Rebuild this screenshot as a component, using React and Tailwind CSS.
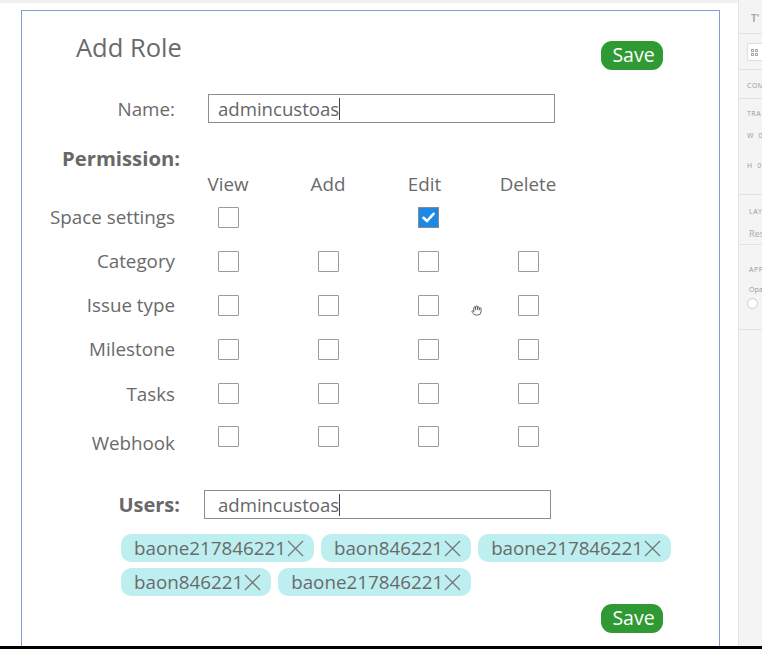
import React from "react";
import { Hand } from "lucide-react";

const FONT = { fontFamily: '"Open Sans", "Noto Sans", sans-serif' };

function Box({ checked }) {
  if (checked) {
    return (
      <div className="w-[21px] h-[21px] border border-[#8a8a8a] bg-[#1e88e5] flex items-center justify-center">
        <svg width="13" height="11" viewBox="0 0 13 11">
          <path d="M1.5 5.8 L5 9 L11.5 1.8" stroke="white" strokeWidth="2.6" fill="none" strokeLinecap="round" strokeLinejoin="round" />
        </svg>
      </div>
    );
  }
  return <div className="w-[21px] h-[21px] border-[1.5px] border-[#9a9a9a] bg-white rounded-[1px]" />;
}

function Cross() {
  return (
    <svg width="17" height="17" viewBox="0 0 17 17" className="ml-[1px]">
      <path d="M1 1 L16 16 M16 1 L1 16" stroke="#777" strokeWidth="1.3" fill="none" />
    </svg>
  );
}

function Tag({ label }) {
  return (
    <div className="h-[28px] flex items-center pl-[13px] pr-[10px] rounded-[10px] bg-[#bdeff0] text-[18.8px] text-[#6a6a6a]">
      <span>{label}</span>
      <Cross />
    </div>
  );
}

function SaveBtn() {
  return (
    <div className="w-[62px] h-[29px] rounded-[11px] bg-[#2f9a33] text-white text-[19.5px] flex items-center justify-center leading-none pb-[1px] pl-[3px]">
      Save
    </div>
  );
}

const rows = [
  ["Space settings", [true, false, true, false], [false, false, true, false]],
  ["Category", [true, true, true, true]],
  ["Issue type", [true, true, true, true]],
  ["Milestone", [true, true, true, true]],
  ["Tasks", [true, true, true, true]],
  ["Webhook", [true, true, true, true]],
];

function SidePanel() {
  const t = "text-[7px] text-[#999] tracking-[0.5px] leading-none whitespace-nowrap";
  return (
    <div className="w-[24px] h-full bg-[#f4f4f4] border-l border-[#e4e4e4] overflow-hidden flex flex-col">
      <div className="h-[34px] border-b border-[#e2e2e2] pl-[12px] pt-[13px] text-[10px] text-[#aaa] font-bold leading-none whitespace-nowrap">T'</div>
      <div className="h-[36px] border-b border-[#e2e2e2] pl-[8px] pt-[9px]">
        <div className="w-[20px] h-[18px] border border-[#ddd] bg-white rounded-[2px] flex items-center pl-[3px]">
          <div className="grid grid-cols-2 gap-[1px]">
            <div className="w-[3px] h-[3px] border border-[#aaa]" />
            <div className="w-[3px] h-[3px] border border-[#aaa]" />
            <div className="w-[3px] h-[3px] border border-[#aaa]" />
            <div className="w-[3px] h-[3px] border border-[#aaa]" />
          </div>
        </div>
      </div>
      <div className="h-[29px] border-b border-[#e2e2e2] pl-[8px] pt-[12px]"><div className={t}>COM</div></div>
      <div className="h-[96px] border-b border-[#e2e2e2] pl-[8px] pt-[11px]">
        <div className={t}>TRA</div>
        <div className={t + " mt-[15px]"}>W&nbsp;&nbsp;0</div>
        <div className="h-px bg-[#ddd] ml-[18px] mt-[8px]" />
        <div className={t + " mt-[14px]"}>H&nbsp;&nbsp;0</div>
        <div className="h-px bg-[#ddd] ml-[18px] mt-[8px]" />
      </div>
      <div className="h-[50px] border-b border-[#e2e2e2] pl-[10px] pt-[13px]">
        <div className={t}>LAY</div>
        <div className="text-[9px] text-[#aaa] leading-none mt-[14px] whitespace-nowrap">Res</div>
      </div>
      <div className="h-[85px] border-b border-[#e2e2e2] pl-[10px] pt-[21px]">
        <div className={t}>APP</div>
        <div className="text-[7px] text-[#999] leading-none mt-[13px] whitespace-nowrap">Opa</div>
        <div className="w-[11px] h-[11px] rounded-full border border-[#ccc] bg-white mt-[5px] -ml-[2px]" />
      </div>
    </div>
  );
}

export default function App() {
  return (
    <div className="w-[762px] h-[649px] overflow-hidden bg-white flex flex-col" style={FONT}>
      <div className="h-[646px] flex">
        <div className="w-[738px] h-full flex flex-col">
          <div className="h-[3px] bg-[#f1f1f1]" />
          <div className="ml-[21px] mt-[7px] w-[699px] flex-1 border border-b-0 border-[#7fa0d2] bg-white relative text-[#6a6a6a]">
            {/* header */}
            <div className="flex items-start justify-between">
              <div className="ml-[54px] mt-[20px] h-[32px] leading-[32px] text-[25.5px] text-[#6a6a6a]">Add Role</div>
              <div className="mt-[30px] mr-[56px]"><SaveBtn /></div>
            </div>
            {/* name */}
            <div className="mt-[24px] flex items-center h-[29px]">
              <div className="w-[156px] pr-[3px] pt-[2px] text-right text-[18.8px]">Name:</div>
              <div className="ml-[30px] w-[347px] h-[29px] border-[1.5px] border-[#8c8c8c] flex items-center pl-[9px] text-[18.6px] text-[#666]">
                <span>admincustoas</span>
                <span className="w-px h-[22px] bg-[#444]" />
              </div>
            </div>
            {/* permission */}
            <div className="mt-[23px] ml-[40px] h-[24px] leading-[24px] text-[20.3px] font-bold text-[#686868]">Permission:</div>
            <div className="mt-[3px] grid grid-cols-[156px_100px_100px_100px_100px]">
              <div className="h-[22px]" />
              {["View", "Add", "Edit", "Delete"].map((h, i) => (
                <div key={h} className={"h-[22px] flex items-center justify-center text-[18.8px] " + (i === 2 ? "pr-[7px]" : "")}>{h}</div>
              ))}
              {rows.map(([label, show, checked], ri) => (
                <React.Fragment key={label}>
                  <div className={"h-[44px] flex justify-end pr-[3px] text-[18.8px] whitespace-nowrap " + (ri === 5 ? "items-end pb-[2px]" : ri === 4 ? "items-center pt-[3px]" : "items-center")}>{label}</div>
                  {show.map((s, i) => (
                    <div key={i} className={"h-[44px] flex justify-center " + (ri === 5 ? "items-start pt-[11px]" : "items-center")}>
                      {s ? <Box checked={checked ? checked[i] : false} /> : null}
                    </div>
                  ))}
                </React.Fragment>
              ))}
            </div>
            {/* users */}
            <div className="mt-[31px] flex items-center h-[29px]">
              <div className="w-[158px] text-right text-[20px] font-bold text-[#686868]">Users:</div>
              <div className="ml-[24px] w-[347px] h-[29px] border-[1.5px] border-[#8c8c8c] flex items-center pl-[13px] text-[18.6px] text-[#666]">
                <span>admincustoas</span>
                <span className="w-px h-[22px] bg-[#444]" />
              </div>
            </div>
            <div className="mt-[15px] ml-[99px] w-[570px] flex flex-wrap gap-x-[7px] gap-y-[6px]">
              <Tag label="baone217846221" />
              <Tag label="baon846221" />
              <Tag label="baone217846221" />
              <Tag label="baon846221" />
              <Tag label="baone217846221" />
            </div>
            <div className="mt-[8px] flex justify-end mr-[56px]"><SaveBtn /></div>
            <Hand className="absolute left-[449px] top-[294px] text-[#555]" size={11} strokeWidth={2} />
          </div>
        </div>
        <SidePanel />
      </div>
      <div className="h-[3px] bg-black" />
    </div>
  );
}
